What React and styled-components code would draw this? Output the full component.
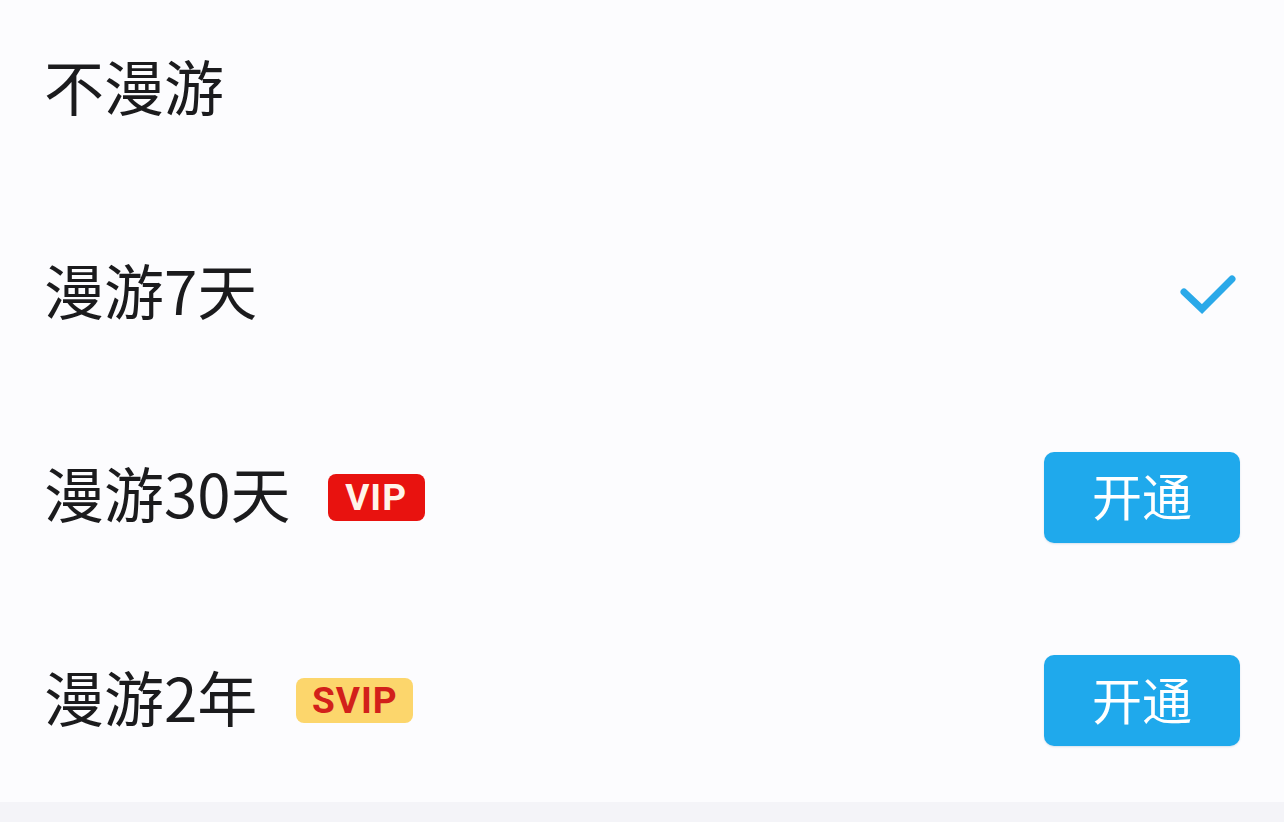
import React from "react";
import styled, { createGlobalStyle } from "styled-components";

const Global = createGlobalStyle`
  html, body { margin: 0; padding: 0; background: #fcfcfe; }
  body { font-family: "Noto Sans CJK SC", "Noto Sans", sans-serif; }
`;

const Page = styled.div`
  width: 1284px;
  height: 822px;
  display: flex;
  flex-direction: column;
  background: #fcfcfe;
  overflow: hidden;
`;

const List = styled.div`
  flex: 1;
  display: flex;
  flex-direction: column;
  gap: 111.5px;
  padding: 44px 44px 0 44px;
`;

const Row = styled.div`
  height: 92px;
  display: flex;
  align-items: center;
`;

const Label = styled.div`
  font-family: "Noto Sans CJK SC", sans-serif;
  font-size: 60px;
  line-height: 1;
  color: #1b1b1d;
  padding-bottom: 10px;
  white-space: nowrap;
`;

const Badge = styled.span`
  margin-left: ${(p) => p.$gap}px;
  width: ${(p) => p.$w}px;
  height: ${(p) => p.$h}px;
  border-radius: 8px;
  display: inline-flex;
  align-items: center;
  justify-content: center;
  font-family: Roboto, "Liberation Sans", sans-serif;
  font-weight: 700;
  font-size: 37px;
  line-height: 1;
  letter-spacing: 1px;
  background: ${(p) => (p.$kind === "svip" ? "#fcd66c" : "#e8120f")};
  color: ${(p) => (p.$kind === "svip" ? "#d2201a" : "#fff4ea")};
`;

const Spacer = styled.div`
  flex: 1;
`;

const OpenButton = styled.button`
  width: 196px;
  height: 91px;
  border: none;
  border-radius: 10px;
  background: #1fa9ec;
  color: #ffffff;
  font-family: "Noto Sans CJK SC", sans-serif;
  font-size: 50px;
  line-height: 1;
  display: flex;
  align-items: center;
  justify-content: center;
  padding: 0 0 6px 0;
  box-shadow: 0 1px 2px rgba(0, 80, 140, 0.15);
`;

const Check = styled.svg`
  width: 60px;
  height: 44px;
  margin-right: 2px;
`;

const Footer = styled.div`
  height: 20px;
  background: #f4f4f8;
`;

export default function App() {
  return (
    <>
      <Global />
      <Page>
        <List>
          <Row>
            <Label>不漫游</Label>
          </Row>
          <Row>
            <Label>漫游7天</Label>
            <Spacer />
            <Check viewBox="0 0 60 44">
              <polyline
                points="6,20 24,37 54,7"
                fill="none"
                stroke="#2aa9e9"
                strokeWidth="7"
                strokeLinecap="round"
                strokeLinejoin="miter"
              />
            </Check>
          </Row>
          <Row>
            <Label>漫游30天</Label>
            <Badge $kind="vip" $gap={37} $w={97} $h={47}>VIP</Badge>
            <Spacer />
            <OpenButton>开通</OpenButton>
          </Row>
          <Row>
            <Label>漫游2年</Label>
            <Badge $kind="svip" $gap={39} $w={117} $h={45}>SVIP</Badge>
            <Spacer />
            <OpenButton>开通</OpenButton>
          </Row>
        </List>
        <Footer />
      </Page>
    </>
  );
}
